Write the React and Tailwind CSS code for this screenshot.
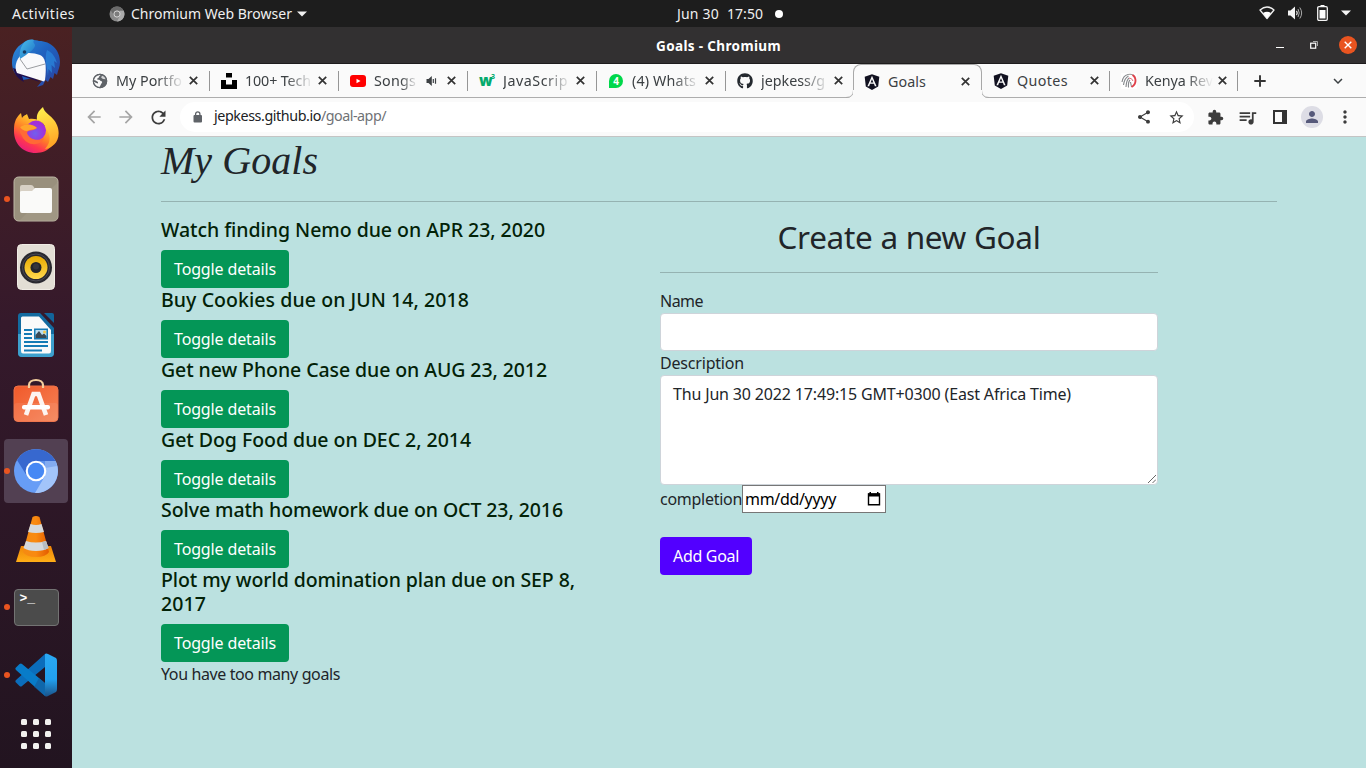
import { useLayoutEffect, useRef } from "react";
import {
  MdShare, MdStarBorder, MdExtension, MdQueueMusic, MdPerson, MdMoreVert,
  MdArrowBack, MdArrowForward, MdRefresh, MdExpandMore,
} from "react-icons/md";
import { FaAngular, FaGithub } from "react-icons/fa";

// Single-line text whose letter spacing is adjusted to fill a width of `w` pixels.
function Fit({ w, className = "", children }) {
  const ref = useRef(null);
  useLayoutEffect(() => {
    const el = ref.current;
    const adjust = () => {
      el.style.letterSpacing = "0px";
      const natural = el.getBoundingClientRect().width;
      el.style.letterSpacing = `${(w - natural) / el.textContent.length}px`;
    };
    adjust();
    document.fonts?.ready.then(adjust);
  }, [w]);
  return <span ref={ref} className={`inline-block whitespace-pre ${className}`}>{children}</span>;
}

function Thunderbird() {
  return (
    <svg width="50" height="50" viewBox="0 0 50 50">
      <defs>
        <linearGradient id="tb" x1="0" y1="0" x2="1" y2="1">
          <stop offset="0" stopColor="#2f8fdc" /><stop offset=".45" stopColor="#1f62c0" /><stop offset="1" stopColor="#2b3f9c" />
        </linearGradient>
        <linearGradient id="tb2" x1="0" y1="0" x2="1" y2="1">
          <stop offset="0" stopColor="#4cc0ea" /><stop offset="1" stopColor="#1b6fc6" />
        </linearGradient>
      </defs>
      <path d="M12 5C17 0 25 2 28 3C40 3 49 12 49 24C49 29 47 32 46 37L43.500 35L42 41L39.500 39L37 44L34.500 42L32 47L26 49L31 43L34 38L12 42C5 39 1 32 1 25C1 16 5 9 12 5Z" fill="url(#tb)" />
      <path d="M2 30C4 37 7 41 13 44L11 38L29 44L20 38L5 31Z" fill="#20104e" />
      <path d="M10 17C15 14 23 15 29 17C34 19 36 26 34 42L33 43.500L6 35C3 29 5 22 10 17Z" fill="#f9f9fb" />
      <path d="M9 21L16 31L34 26" stroke="#9a9ca0" fill="none" />
      <path d="M12 6C14 3 19 .5 23 2C21 5 25 6 24 8C22 13 18 14 15 17L9 21C8 17 9 10 12 6Z" fill="url(#tb2)" />
      <path d="M36 12C42 15 44 19 46 25L43 23L44 30L40.500 27L41 35L37.500 31L37 38C36 30 33 20 36 12Z" fill="#2a86dc" opacity=".75" />
      <circle cx="13.500" cy="14" r="1.800" fill="#173c64" />
    </svg>
  );
}

function Firefox() {
  return (
    <svg width="48" height="48" viewBox="0 0 48 48" className="-mt-[2px]">
      <defs>
        <linearGradient id="ff" x1=".8" y1="0" x2=".2" y2="1">
          <stop offset="0" stopColor="#fff44f" /><stop offset=".3" stopColor="#ffbd2b" /><stop offset=".55" stopColor="#ff7b28" /><stop offset=".75" stopColor="#ff3750" /><stop offset="1" stopColor="#e31587" />
        </linearGradient>
        <radialGradient id="ffp" cx=".45" cy=".65"><stop offset="0" stopColor="#7060ee" /><stop offset="1" stopColor="#a32fd8" /></radialGradient>
        <linearGradient id="ffy" x1="0" y1="0" x2=".2" y2="1"><stop offset="0" stopColor="#fff44f" /><stop offset="1" stopColor="#ffa526" /></linearGradient>
      </defs>
      <path d="M3 16C4 12 6 10 9 7L10 12C12 9 14 9 15 8L17 13C25 12 30 15 32 20L43 17C49 30 41 47 24 47C10 47 2 37 2 25C2 21 2 19 3 16Z" fill="url(#ff)" />
      <circle cx="24" cy="24.500" r="10" fill="url(#ffp)" />
      <path d="M25 14C24 7 28 4 31 1C33 9 43 10 46 22C49 35 41 42 33 43C40 36 38 27 34 23C33 18 29 15 25 14Z" fill="url(#ffy)" />
      <path d="M8 21C14 17 21 18 25 22C20 26 16 23 15 27C17 33 25 36 32 32C28 41 14 40 10 30C8 27 7 24 8 21Z" fill="#ff6a35" />
      <path d="M8 21C14 17 21 18 25 22C21 24 19 23 15 25C12 25 9 23 8 21Z" fill="#ffa52b" />
    </svg>
  );
}

function Files() {
  return (
    <svg width="46" height="46" viewBox="0 0 46 46">
      <rect x="1" y="1" width="44" height="44" rx="4.500" fill="#99907d" stroke="#beb7a6" />
      <path d="M45 6V40Q45 45 40 45H6L45 6Z" fill="#a59d8b" opacity=".55" />
      <path d="M7 17V11Q7 9 9 9H18Q20 9 20.500 10.500L22 13V17Z" fill="#d7d0c4" />
      <path d="M7 16Q7 15 9 15H19L22 12H37Q39 12 39 14V35Q39 37 37 37H9Q7 37 7 35Z" fill="#fafaf9" />
    </svg>
  );
}

function Rhythmbox() {
  return (
    <svg width="38" height="46" viewBox="0 0 38 46">
      <defs><linearGradient id="rb" x1="0" y1="0" x2="0" y2="1"><stop offset="0" stopColor="#e8a900" /><stop offset="1" stopColor="#ffd94e" /></linearGradient></defs>
      <rect x=".5" y=".5" width="37" height="45" rx="4" fill="#e3ded5" stroke="#f0ece5" />
      <circle cx="19" cy="23.500" r="16" fill="#29282f" />
      <circle cx="19" cy="23.500" r="13.500" fill="none" stroke="#4b4a54" />
      <circle cx="19" cy="23.500" r="11.500" fill="url(#rb)" />
      <circle cx="19" cy="23.500" r="5.500" fill="#24252b" />
      <circle cx="19" cy="22.500" r="3" fill="#35363c" />
    </svg>
  );
}

function Writer() {
  return (
    <svg width="38" height="46" viewBox="0 0 38 46">
      <path d="M4 1H23L37 16V41Q37 45 33 45H5Q1 45 1 41V4Q1 1 4 1Z" fill="#136ba0" />
      <path d="M1 22H37V41Q37 45 33 45H5Q1 45 1 41Z" fill="#3da0cd" />
      <path d="M5.500 4.500H22L34 18V39Q34 41.500 32 41.500H6Q4 41.500 4 39V6Q4 4.500 5.500 4.500Z" fill="#fafafa" />
      <path d="M27 1H35Q37 1 37 3V11Z" fill="#12649a" />
      <path d="M7 18H15M7 22H15M7 26H15M7 30H31M7 34H31M7 38.500H25" stroke="#157bb5" strokeWidth="2" />
      <rect x="17" y="16.500" width="14" height="11" fill="#157bb5" />
      <rect x="18.500" y="18" width="11" height="8" fill="#b7ddf2" />
      <path d="M18.500 26V23L22 19L25 23L27 21.500L29.500 24V26Z" fill="#394955" />
      <circle cx="27.500" cy="20" r="1.500" fill="#f3c74a" />
    </svg>
  );
}

function Software() {
  return (
    <svg width="46" height="44" viewBox="0 0 46 44" className="mb-[6px]">
      <defs><linearGradient id="sw" x1="0" y1="0" x2="1" y2="1"><stop offset="0" stopColor="#f1592a" /><stop offset="1" stopColor="#f58458" /></linearGradient></defs>
      <rect x="1" y="8" width="44" height="35.500" rx="4" fill="url(#sw)" stroke="#ee7147" />
      <rect x="1" y="25" width="44" height="18.500" rx="3" fill="#fff" opacity=".08" />
      <path d="M16 10V7C16 4 19 2 23 2S30 4 30 7V10" fill="none" stroke="#f4cf9e" strokeWidth="2.200" />
      <path d="M13 37L20.500 16H25.500L33 37" fill="none" stroke="#fdf4f0" strokeWidth="4.600" />
      <rect x="9" y="27" width="28" height="4.500" rx="2" fill="#fff" />
    </svg>
  );
}

function Chromium() {
  return (
    <svg width="46" height="46" viewBox="0 0 46 46">
      <circle cx="23" cy="23" r="22" fill="#679df6" />
      <path d="M4 12A22 22 0 0 1 42.500 13H23L14 28Z" fill="#3768cf" />
      <path d="M42.500 13A22 22 0 0 1 22 45L32 28V13Z" fill="#a2c4fa" />
      <path d="M32 20L44 18L42.500 13H23Z" fill="#4a7fdc" opacity=".35" />
      <circle cx="23" cy="23" r="10.300" fill="#fff" />
      <circle cx="23" cy="23" r="8.200" fill="#4688f4" />
    </svg>
  );
}

function Vlc() {
  return (
    <svg width="42" height="48" viewBox="0 0 42 48">
      <defs>
        <linearGradient id="vl" x1="0" y1="0" x2="1" y2="0"><stop offset="0" stopColor="#f58a12" /><stop offset=".5" stopColor="#f98a10" /><stop offset="1" stopColor="#e35b00" /></linearGradient>
        <linearGradient id="vb" x1="0" y1="0" x2="0" y2="1"><stop offset="0" stopColor="#ef8507" /><stop offset="1" stopColor="#ffae17" /></linearGradient>
      </defs>
      <path d="M6 31H36L41 47H1Z" fill="url(#vb)" />
      <path d="M17.500 2Q21 0 24.500 2L34 37Q31 42 21 42Q11 42 8 37Z" fill="url(#vl)" />
      <path d="M15.500 9Q21 11 26.500 9L29 17Q21 19 13 17Z" fill="#d5d9dc" />
      <path d="M11 26Q21 29 31 26L33.500 33Q29 36 21 36Q13 36 8.500 33Z" fill="#d5d9dc" />
      <path d="M27 27L31 26L33.500 33L29 35Z" fill="#b7bdc2" />
    </svg>
  );
}

function TerminalIcon() {
  return (
    <div className="flex h-[37px] w-[45px] rounded border border-[#737373] bg-[#4b4b4b] pl-[5px] font-['Liberation_Mono'] text-[13px] leading-[17px] font-bold text-white">
      &gt;_
    </div>
  );
}

function VsCode() {
  return (
    <svg width="44" height="44" viewBox="0 0 44 44">
      <defs><linearGradient id="vs" x1="0" y1="0" x2="0" y2="1"><stop offset="0" stopColor="#2aa9f3" /><stop offset=".6" stopColor="#22a0ee" /><stop offset="1" stopColor="#1b5288" /></linearGradient></defs>
      <path d="M31 1V14L8 33Q7 34 5.500 33L1.500 29Q1 28 2 27Z" fill="#0b6dbb" />
      <path d="M31 43V30L8 11Q7 10 5.500 11L1.500 15Q1 16 2 17Z" fill="#087cc9" />
      <path d="M20 34L31 43V30L25 25Z" fill="#155691" opacity=".55" />
      <path d="M31 1Q32 0 34 1L42 5Q43 6 43 8V36Q43 38 42 39L34 43Q32 44 31 43Z" fill="url(#vs)" />
    </svg>
  );
}

const dock = [
  { Icon: Thunderbird }, { Icon: Firefox }, { Icon: Files, run: true }, { Icon: Rhythmbox },
  { Icon: Writer }, { Icon: Software }, { Icon: Chromium, run: true, active: true },
  { Icon: Vlc }, { Icon: TerminalIcon, run: true }, { Icon: VsCode, run: true },
];

function Dock() {
  return (
    <aside className="flex w-[72px] shrink-0 flex-col bg-linear-to-b from-[#4a2122] via-[#35192b] via-40% to-[#221420] pt-[2px]">
      {dock.map(({ Icon, run, active }, i) => (
        <div key={i} className="flex h-[68px] items-center">
          <div className={`relative ml-1 flex size-16 items-center justify-center rounded ${active ? "bg-[#524052]" : ""}`}>
            {run && <span className="absolute left-0 size-[6px] rounded-full bg-[#e95420]" />}
            <Icon />
          </div>
        </div>
      ))}
      <div className="mt-[10px] ml-[21px] grid w-[30px] grid-cols-3 gap-[6px]">
        {Array.from({ length: 9 }, (_, i) => <span key={i} className="size-[6px] rounded-[1.500px] bg-[#f2f1ef]" />)}
      </div>
    </aside>
  );
}

function TopBar() {
  return (
    <header className="grid h-[27px] shrink-0 grid-cols-[677px_1fr_auto] items-center bg-[#1d1d1d] text-[14px] leading-[27px] text-[#f0f0f0]">
      <div className="flex items-center pl-3">
        <Fit w={63}>Activities</Fit>
        <svg className="ml-[34px]" width="16" height="16" viewBox="0 0 16 16">
          <circle cx="8" cy="8" r="7.500" fill="#8a8a8a" />
          <path d="M1.500 4A7.500 7.500 0 0 1 14.700 4.700H8L5 9.500Z" fill="#6a6a6a" />
          <path d="M14.700 4.700A7.500 7.500 0 0 1 8 15.500L11 9.500V4.700Z" fill="#ababab" />
          <circle cx="8" cy="8" r="3.100" fill="#7c7c7c" stroke="#d8d8d8" />
        </svg>
        <Fit w={161} className="ml-[6px]">Chromium Web Browser</Fit>
        <svg className="ml-[5px]" width="10" height="6" viewBox="0 0 10 6"><path d="M0 .5H10L5 5.500Z" fill="#f0f0f0" /></svg>
      </div>
      <div className="flex items-center">
        <Fit w={42}>Jun 30</Fit>
        <Fit w={36} className="ml-2">17:50</Fit>
        <span className="ml-[12px] size-2 rounded-full bg-white" />
      </div>
      <div className="flex items-center pr-[15px] pb-px">
        <svg width="16" height="14" viewBox="0 0 16 14">
          <path d="M1 4Q8 -2 15 4L8 12.500Z" fill="none" stroke="#f0f0f0" strokeWidth="1.300" strokeLinejoin="round" />
          <path d="M4 7Q8 4.500 12 7L8 12.500Z" fill="#fff" />
        </svg>
        <svg className="ml-[12px]" width="16" height="14" viewBox="0 0 16 14">
          <path d="M1 4.500H3.500L8 .5V13.500L3.500 9.500H1Z" fill="#f4f4f4" />
          <path d="M9.500 4.800Q11 7 9.500 9.200" fill="none" stroke="#eee" strokeWidth="1.200" />
          <path d="M11 3Q13.500 7 11 11M12.800 1.500Q16.500 7 12.800 12.500" fill="none" stroke="#aaa" strokeWidth="1" />
        </svg>
        <svg className="ml-[14px]" width="11" height="16" viewBox="0 0 11 16">
          <path d="M3.500 0H7.500V1.500H3.500Z" fill="#fff" />
          <rect x=".7" y="1.700" width="9.600" height="13.600" rx="1.200" fill="none" stroke="#f4f4f4" strokeWidth="1.300" />
          <rect x="2.500" y="5" width="6" height="8.500" fill="#fff" />
        </svg>
        <svg className="ml-[13px]" width="10" height="6" viewBox="0 0 10 6"><path d="M0 .5H10L5 5.500Z" fill="#f4f4f4" /></svg>
      </div>
    </header>
  );
}

function TitleBar() {
  return (
    <div className="grid h-[37px] shrink-0 grid-cols-[584px_1fr_auto] items-center border-b border-[#1e1c1d] bg-[#323031] text-white">
      <span />
      <Fit w={125} className="justify-self-start pt-[2px] text-[13.500px] font-bold">Goals - Chromium</Fit>
      <div className="flex items-center pr-[9px]">
        <span className="mt-[4px] h-px w-2 bg-white" />
        <svg className="ml-[26px]" width="8" height="8" viewBox="0 0 8 8">
          <rect x=".7" y="2.200" width="5" height="5" fill="none" stroke="#fff" strokeWidth="1.200" />
          <path d="M3 .5H7.500V5" fill="none" stroke="#aaa" />
        </svg>
        <span className="ml-[21px] flex size-[18px] items-center justify-center rounded-full bg-[#e95420]">
          <svg width="8" height="8" viewBox="0 0 8 8"><path d="M.7 .7L7.300 7.300M7.300 .7L.7 7.300" stroke="#fff" strokeWidth="1.400" /></svg>
        </span>
      </div>
    </div>
  );
}

const Globe = () => (
  <svg width="16" height="16" viewBox="0 0 16 16">
    <circle cx="8" cy="8" r="7.200" fill="#5f6368" />
    <path d="M9 1.800C7.500 3 7 3.400 6.800 4.600C6 5.500 5 5.200 5.200 6.600C6.500 7 8 6.600 8.600 8C10 8.200 10.600 8.800 9.800 10C9 11 8.600 12.500 7.400 14.300C4.500 14 2 11.500 1.800 8.800L4.300 10L6 10.400V9L3.600 7.400L2 7C2.600 4 5 1.800 9 1.800Z" fill="#fafafa" />
    <path d="M10 2.400L9.200 4.800L11 6L13.800 6.200C13 4 11.800 3 10 2.400Z" fill="#fafafa" opacity=".75" />
    <circle cx="8" cy="8" r="6.700" fill="none" stroke="#5f6368" strokeWidth="1.200" />
  </svg>
);
const Unsplash = () => <svg width="16" height="16" viewBox="0 0 16 16"><path d="M5 0H11V4.500H5ZM0 7H5V11.500H11V7H16V16H0Z" fill="#000" /></svg>;
const Youtube = () => <svg width="16" height="12" viewBox="0 0 16 12"><rect width="16" height="12" rx="3" fill="#f00" /><path d="M6.500 3.700L10.500 6L6.500 8.300Z" fill="#fff" /></svg>;
const W3 = () => <span className="-mt-px flex w-4 items-start font-['Open_Sans'] text-[#04aa6d]"><b className="w-[12px] text-[15px] leading-[14px] font-extrabold">w</b><b className="w-1 text-[7px] leading-[8px]">3</b></span>;
const WhatsApp = () => <span className="flex size-[14px] items-center justify-center rounded-full rounded-bl-[3px] bg-[#00d84b] text-[10px] leading-none font-bold text-white">4</span>;
const Github = () => <FaGithub className="size-4 text-[#24292f]" />;
const Angular = () => <FaAngular className="size-[18px] shrink-0 text-[#111120]" />;
const Kenya = () => (
  <svg width="16" height="16" viewBox="0 0 16 16" fill="none">
    <rect width="16" height="16" fill="#fff" />
    <path d="M7 1.500Q2 2.500 1 9M7.500 3Q3.500 5 2.500 12M8 5Q5.500 7 5 14M9 7Q7 9 7.500 14.500M9.500 9L10.500 14" stroke="#85888c" strokeWidth="1.100" />
    <path d="M7 1.500Q12 .5 14 4" stroke="#999" strokeWidth="1.100" />
    <path d="M11.500 2Q14.700 4 14.500 8T10.500 14" stroke="#e0404a" strokeWidth="1.900" />
    <path d="M8 5Q11 5 12 8" stroke="#e0707a" />
  </svg>
);

const CloseX = () => (
  <svg className="ml-[5px] shrink-0" width="9" height="9" viewBox="0 0 9 9"><path d="M.8 .8L8.200 8.200M8.200 .8L.8 8.200" stroke="#333" strokeWidth="1.700" /></svg>
);

function Tab({ Icon, text, w, cell, fade = true, audio, sep = true, active }) {
  return (
    <div className={`flex h-[33px] shrink-0 items-center ${cell} ${active ? "relative h-[34px] rounded-t-lg border border-b-0 border-[#a8a8a8] bg-[#fafafa]" : ""}`}>
      {active && (
        <>
          <svg className="absolute bottom-0 -left-[8px]" width="8" height="8" viewBox="0 0 8 8"><path d="M8 0V8H0Q7.500 8 7.500 0Z" fill="#fafafa" /><path d="M0 7.500Q7.500 7.500 7.500 0" fill="none" stroke="#a8a8a8" /></svg>
          <svg className="absolute -right-[8px] bottom-0" width="8" height="8" viewBox="0 0 8 8"><path d="M0 0V8H8Q.5 8 .5 0Z" fill="#fafafa" /><path d="M8 7.500Q.5 7.500 .5 0" fill="none" stroke="#a8a8a8" /></svg>
          <span className="absolute bottom-0 -left-px h-2 w-px bg-[#fafafa]" />
          <span className="absolute -right-px bottom-0 h-2 w-px bg-[#fafafa]" />
        </>
      )}
      <span className={`flex w-4 shrink-0 items-center justify-center ${active ? "ml-[10px]" : "ml-[11px]"}`}><Icon /></span>
      <span className={`ml-2 flex h-5 shrink-0 items-center overflow-hidden ${audio ? "w-[44px]" : "w-[68px]"} ${fade ? "mask-r-from-60% mask-r-to-100%" : ""}`}>
        <Fit w={w} className="text-[14.300px] leading-5">{text}</Fit>
      </span>
      {audio && (
        <svg className="ml-2" width="16" height="12" viewBox="0 0 16 12">
          <path d="M.5 4H2.500L5.800 1V11L2.500 8H.5Z" fill="#3c4043" />
          <path d="M7.300 4V8M9.500 3.200V8.800" stroke="#3c4043" strokeWidth="1.200" />
        </svg>
      )}
      <CloseX />
      {sep && <span className="ml-auto h-5 w-px bg-[#969696]" />}
    </div>
  );
}

function TabStrip() {
  return (
    <div className="flex h-[34px] shrink-0 items-start bg-[#fafafa] bg-[linear-gradient(to_top,#adadad_1px,transparent_1px)] pl-[9px] text-[#3c4043]">
      <Tab Icon={Globe} text="My Portfo" w={66} cell="w-[129px]" />
      <Tab Icon={Unsplash} text="100+ Tech" w={66} cell="w-[129px]" />
      <Tab Icon={Youtube} text="Songs" w={42} cell="w-[129px]" audio />
      <Tab Icon={W3} text="JavaScrip" w={65} cell="w-[129px]" />
      <Tab Icon={WhatsApp} text="(4) Whats" w={64} cell="w-[129px]" />
      <Tab Icon={Github} text="jepkess/g" w={64} cell="w-[127px]" sep={false} />
      <Tab Icon={Angular} text="Goals" w={38} cell="w-[129px]" fade={false} sep={false} active />
      <Tab Icon={Angular} text="Quotes" w={51} cell="w-[128px]" fade={false} />
      <Tab Icon={Kenya} text="Kenya Rev" w={68} cell="w-[128px]" />
      <div className="flex h-[33px] grow items-center justify-between pr-[19px] pl-4">
        <svg width="12" height="12" viewBox="0 0 12 12"><path d="M6 .3V11.700M.3 6H11.700" stroke="#333" strokeWidth="1.900" /></svg>
        <MdExpandMore className="size-[18px]" />
      </div>
    </div>
  );
}

function Toolbar() {
  return (
    <div className="flex h-[39px] shrink-0 items-center border-b border-[#c4c4c4] bg-[#fafafa] pl-[12px] text-[#3c3c3c]">
      <MdArrowBack className="size-5 text-[#a5a5a5]" />
      <MdArrowForward className="ml-[12px] size-5 text-[#a5a5a5]" />
      <MdRefresh className="ml-[12px] size-[21px]" />
      <div className="ml-[11px] flex h-[30px] w-[1014px] items-center rounded-full bg-white pl-[11px]">
        <svg className="ml-[2px]" width="10" height="12" viewBox="0 0 10 12">
          <rect x=".5" y="4" width="8.500" height="7.500" rx="1" fill="#5f6368" />
          <path d="M2.600 4.500V3A2.150 2.150 0 0 1 6.900 3V4.500" fill="none" stroke="#5f6368" strokeWidth="1.300" />
        </svg>
        <Fit w={107} className="-mt-[2px] ml-[11px] text-[14.300px] text-[#202124]">jepkess.github.io</Fit>
        <Fit w={65} className="-mt-[2px] text-[14.300px] text-[#6f7276]">/goal-app/</Fit>
        <div className="ml-auto flex items-center gap-4 pr-[9px]">
          <MdShare className="size-4" />
          <MdStarBorder className="size-[17px]" />
        </div>
      </div>
      <MdExtension className="ml-[13px] size-[17px]" />
      <MdQueueMusic className="ml-[13px] size-[21px]" />
      <svg className="ml-[15px]" width="14" height="14" viewBox="0 0 14 14"><path d="M0 0H14V14H0ZM2 2V12H9V2Z" fillRule="evenodd" fill="#333" /></svg>
      <span className="ml-[14px] flex size-[22px] items-center justify-center rounded-full bg-[#dddde5]"><MdPerson className="size-[18px] text-[#56597a]" /></span>
      <MdMoreVert className="ml-[12px] size-5" />
    </div>
  );
}

const goals = [
  [["Watch finding Nemo due on APR 23, 2020", 384]],
  [["Buy Cookies due on JUN 14, 2018", 308]],
  [["Get new Phone Case due on AUG 23, 2012", 386]],
  [["Get Dog Food due on DEC 2, 2014", 310]],
  [["Solve math homework due on OCT 23, 2016", 402]],
  [["Plot my world domination plan due on SEP 8,", 414], ["2017", 45]],
];

function GoalsPage() {
  return (
    <main className="grow bg-[#bbe1e0] pr-[89px] pl-[89px] text-[16px] leading-6 text-[#212529]">
      <h1 className="h-12 font-['Liberation_Serif'] text-[40px] leading-[48px] italic"><Fit w={157}>My Goals</Fit></h1>
      <hr className="mt-4 mb-4 border-[#95b3b2]" />
      <div className="flex">
        <section className="w-[499px]">
          {goals.map((lines) => (
            <article key={lines[0][0]}>
              <h5 className="mb-2 flex flex-col items-start text-[19.500px] leading-6 font-medium text-[#022207]">
                {lines.map(([t, w]) => <Fit key={t} w={w}>{t}</Fit>)}
              </h5>
              <button className="flex h-[38px] w-32 items-center rounded bg-[#049657] pl-[13px] text-white"><Fit w={102}>Toggle details</Fit></button>
            </article>
          ))}
          <Fit w={179} className="block w-fit">You have too many goals</Fit>
        </section>
        <form className="flex w-[498px] flex-col">
          <h2 className="flex h-[38px] justify-center text-[31.500px] leading-[38px]"><Fit w={263}>Create a new Goal</Fit></h2>
          <hr className="my-4 border-[#95b3b2]" />
          <label className="flex h-6"><Fit w={43}>Name</Fit></label>
          <div className="h-[38px] rounded border border-[#ced4da] bg-white" />
          <label className="flex h-6"><Fit w={84}>Description</Fit></label>
          <div className="flex h-[110px] items-start justify-between rounded border border-[#ced4da] bg-white pt-[6px] pl-3">
            <Fit w={398}>Thu Jun 30 2022 17:49:15 GMT+0300 (East Africa Time)</Fit>
            <svg className="mr-px mb-px self-end" width="8" height="8" viewBox="0 0 8 8"><path d="M0 8L8 0M4.500 8L8 4.500" stroke="#555" strokeWidth=".9" /></svg>
          </div>
          <div className="flex h-7 items-center">
            <Fit w={82}>completion</Fit>
            <div className="flex h-7 w-36 items-center justify-between border border-[#767676] bg-white pr-[4px] pl-[2px] text-black">
              <Fit w={91}>mm/dd/yyyy</Fit>
              <svg width="14" height="14" viewBox="0 0 14 14"><path d="M1.500 2H12.500V12.800H1.500Z" fill="none" stroke="#000" strokeWidth="1.400" /><path d="M1 1.500H13V4.500H1ZM2.500 0H4V2H2.500ZM10 0H11.500V2H10Z" /></svg>
            </div>
          </div>
          <button type="button" className="mt-6 flex h-[38px] w-[92px] items-center rounded bg-[#5200ff] pl-[13px] text-white"><Fit w={66}>Add Goal</Fit></button>
        </form>
      </div>
    </main>
  );
}

export default function App() {
  return (
    <div className="flex h-[768px] w-[1366px] flex-col overflow-hidden font-['Noto_Sans',sans-serif]">
      <TopBar />
      <div className="flex min-h-0 grow">
        <Dock />
        <div className="flex min-w-0 grow flex-col">
          <TitleBar />
          <TabStrip />
          <Toolbar />
          <GoalsPage />
        </div>
      </div>
    </div>
  );
}
